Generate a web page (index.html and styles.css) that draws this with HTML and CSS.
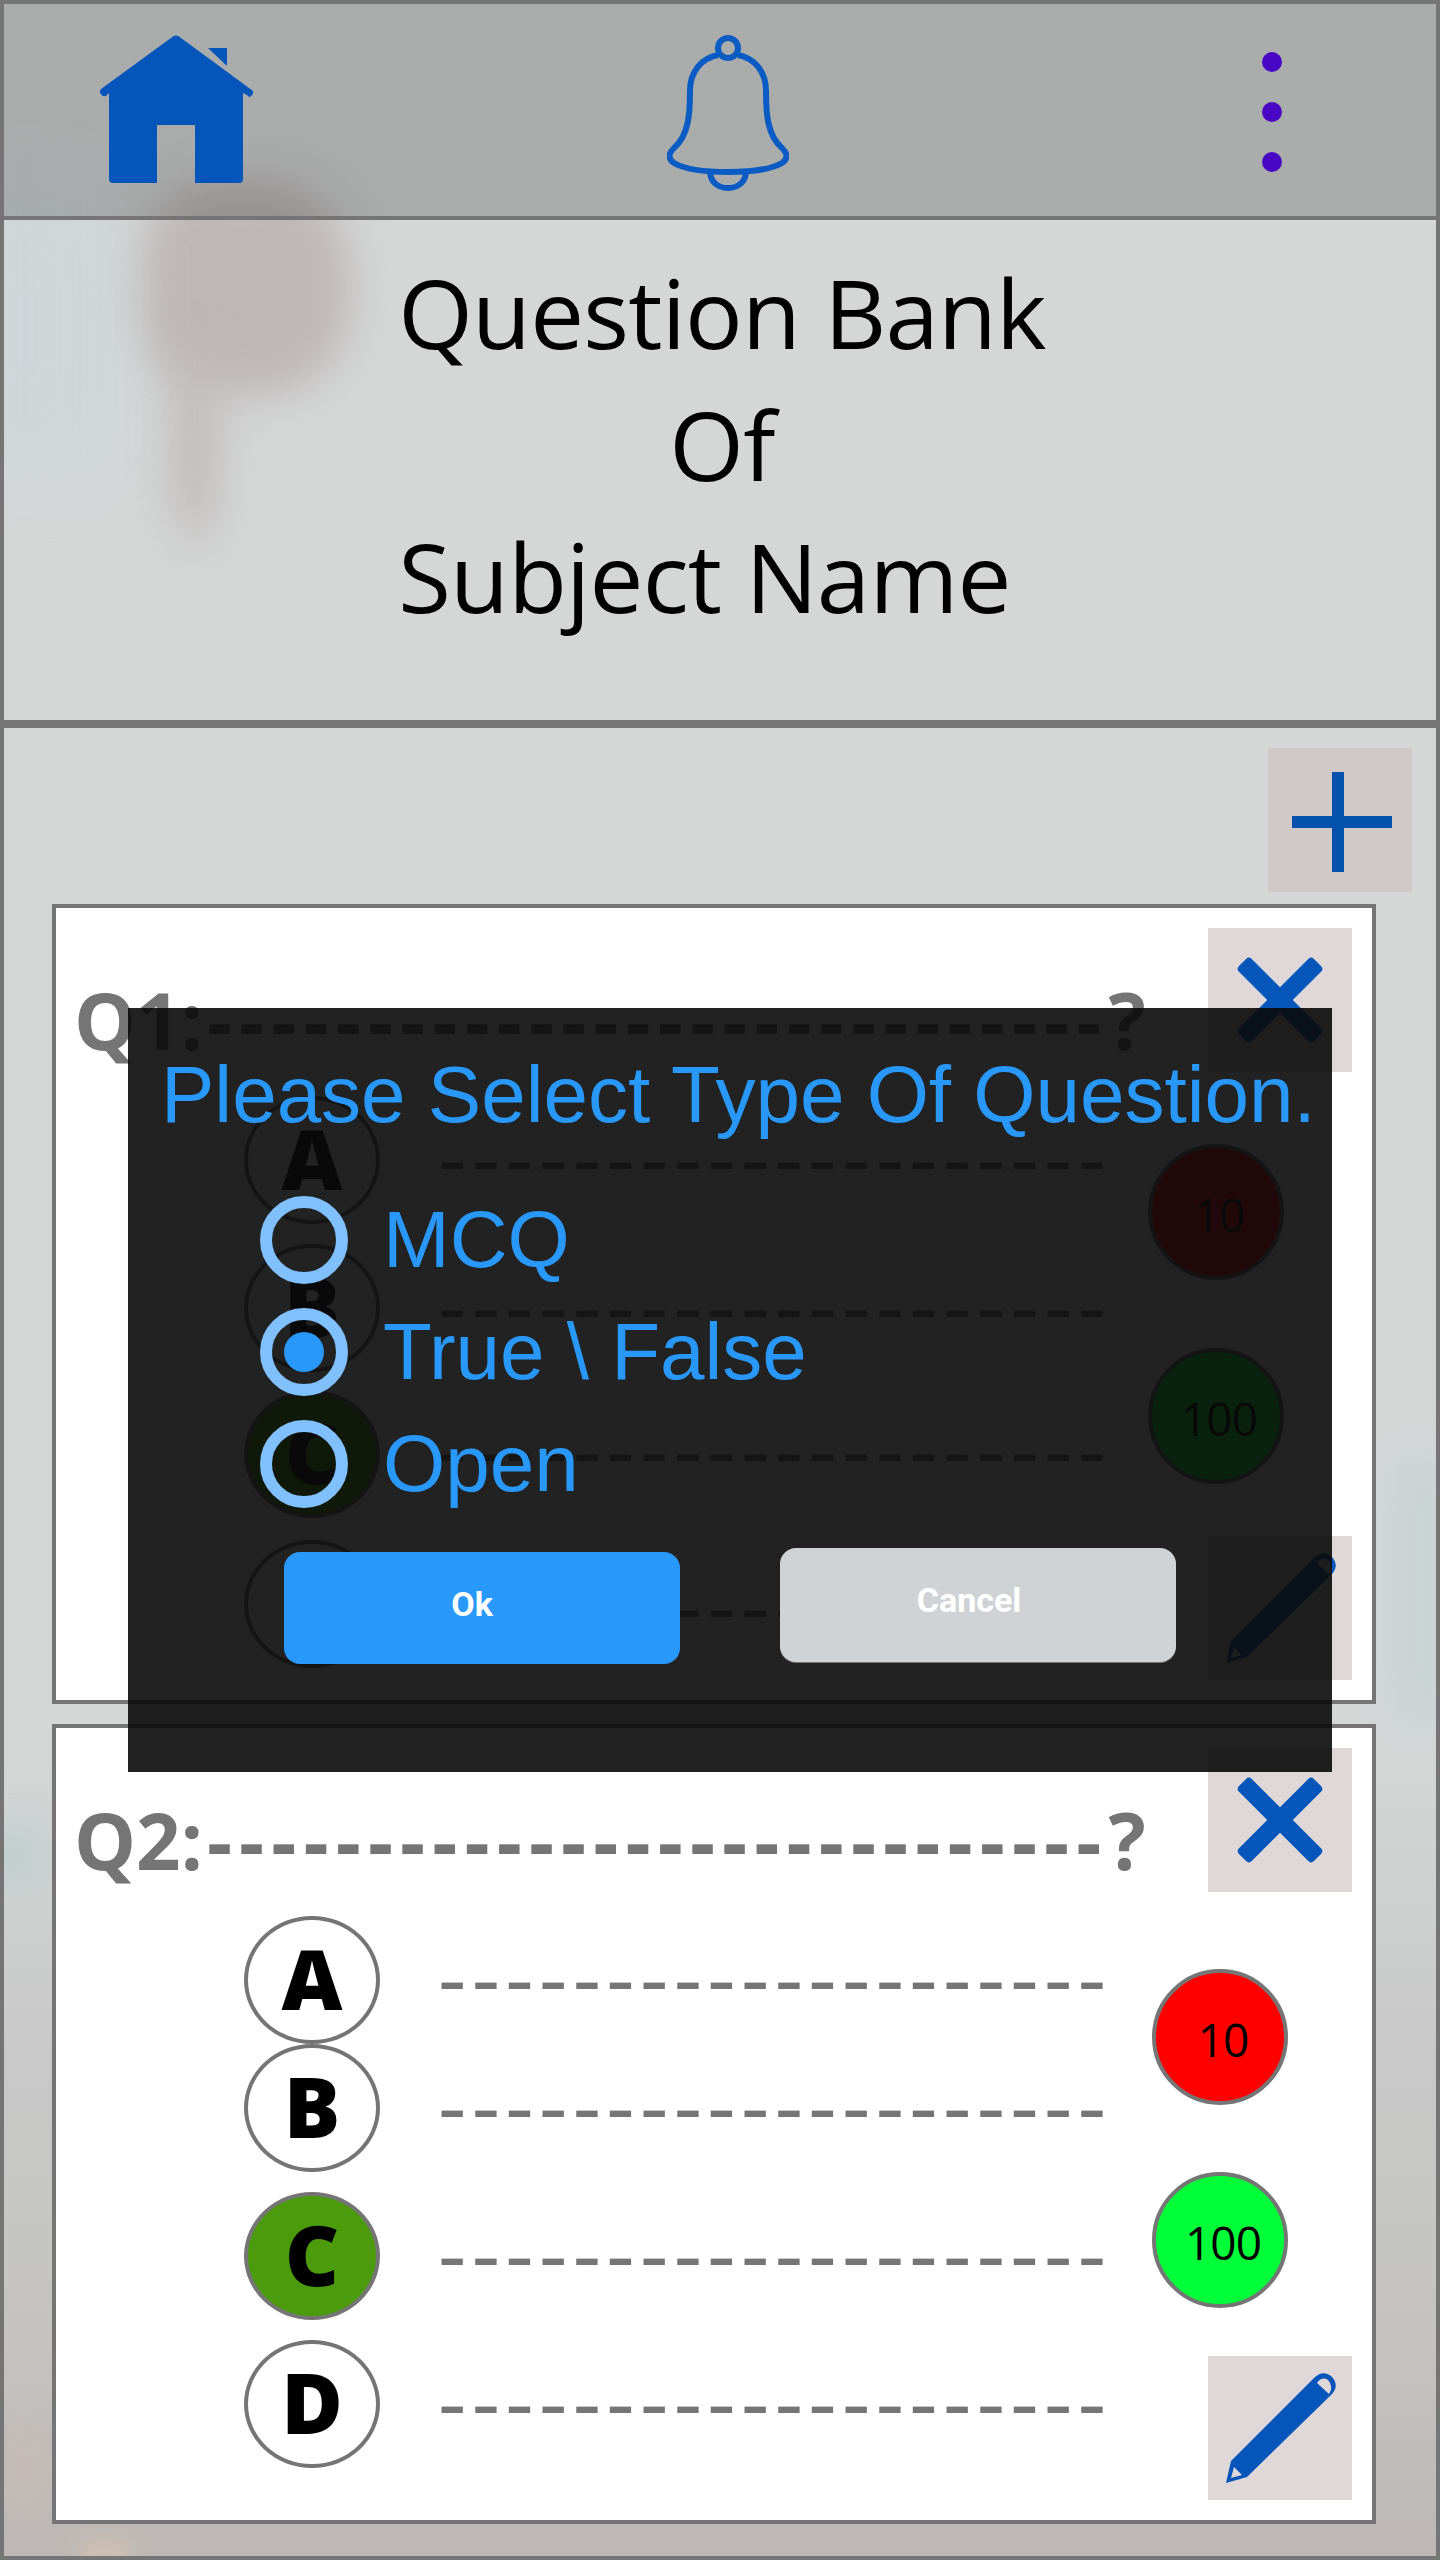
FILE: index.html
```html
<!DOCTYPE html>
<html lang="en">
<head>
    <meta charset="UTF-8">
    <meta name="viewport" content="width=device-width, initial-scale=1.0">
    <title>Question Bank</title>
    <link rel="stylesheet" href="styles.css">
</head>
<body>
    <!-- blurred photo behind the page -->
    <div class="backdrop">
        <div class="blob blob-head"></div>
        <div class="blob blob-tail"></div>
        <div class="blob blob-blue"></div>
        <div class="blob blob-side"></div>
        <div class="blob blob-right"></div>
        <div class="blob blob-low"></div>
        <div class="blob blob-peach"></div>
    </div>

    <div class="app">
        <header class="topbar">
            <svg class="icon-home" width="154" height="148" viewBox="0 0 154 148">
                <path class="blue-fill" d="M148 60 150 62A5 5 0 0 0 154 56 L150 53 L80 1.500 A5 5 0 0 0 74 1.500 L2 54 A4.500 4.500 0 0 0 7 61 L10 58 V144 Q10 148 14 148 H58 V90 H96 V148 H140 Q144 148 144 144 V58Z"/>
                <path class="blue-fill" d="M109 13 H128 V31Z"/>
            </svg>
            <svg class="icon-bell" width="122" height="156" viewBox="0 0 122 156">
                <g class="blue-line">
                    <circle cx="61" cy="13" r="10"/>
                    <path d="M51 20C35 23 23 36 23 56C23 78 22 100 7 113C1 119 1 124 7 128C19 135 41 137 61 137C81 137 103 135 115 128C121 124 121 119 115 113C100 100 99 78 99 56C99 36 87 23 71 20"/>
                    <path d="M43 136C43 147 51 153 61 153C71 153 79 147 79 136"/>
                </g>
            </svg>
            <div class="dots"><span></span><span></span><span></span></div>
        </header>

        <section class="title-band">
            <h1 class="title">
                <span>Question Bank</span>
                <span class="title-mid">Of</span>
                <span>Subject Name</span>
            </h1>
        </section>

        <main class="content">
            <div class="add-row">
                <button class="tool tool-add" aria-label="Add">
                    <svg width="144" height="144" viewBox="0 0 144 144"><path class="plus" d="M64 24H76V68H124V80H76V124H64V80H24V68H64Z"/></svg>
                </button>
            </div>

            <div class="card card-one">
                <div class="q-top">
                    <p class="q-text">Q1:<span class="q-dash">----------------------------</span>?</p>
                    <button class="tool" aria-label="Delete">
                        <svg width="144" height="144" viewBox="0 0 144 144"><g class="blue-fill"><rect x="19" y="63" width="106" height="18" rx="4" transform="rotate(45 72 72)"/><rect x="19" y="63" width="106" height="18" rx="4" transform="rotate(-45 72 72)"/></g></svg>
                    </button>
                </div>
                <div class="q-body">
                    <div class="answers">
                        <div class="answer"><span class="letter">A</span><span class="dash">--------------------</span></div>
                        <div class="answer"><span class="letter">B</span><span class="dash">--------------------</span></div>
                        <div class="answer"><span class="letter right">C</span><span class="dash">--------------------</span></div>
                        <div class="answer"><span class="letter">D</span><span class="dash">--------------------</span></div>
                    </div>
                    <div class="scores">
                        <span class="score score-bad">10</span>
                        <span class="score score-good">100</span>
                        <button class="tool tool-edit" aria-label="Edit">
                            <svg width="144" height="144" viewBox="0 0 144 144"><path class="blue-fill" fill-rule="evenodd" d="M23 105 106 22Q115 13 124 21Q132 30 123 39L39 121 18 127ZM109 27 121 38Q126 30 120 24Q114 20 109 27ZM26 111 23 122 34 119Z"/></svg>
                        </button>
                    </div>
                </div>
            </div>

            <div class="card card-two">
                <div class="q-top">
                    <p class="q-text">Q2:<span class="q-dash">----------------------------</span>?</p>
                    <button class="tool" aria-label="Delete">
                        <svg width="144" height="144" viewBox="0 0 144 144"><g class="blue-fill"><rect x="19" y="63" width="106" height="18" rx="4" transform="rotate(45 72 72)"/><rect x="19" y="63" width="106" height="18" rx="4" transform="rotate(-45 72 72)"/></g></svg>
                    </button>
                </div>
                <div class="q-body">
                    <div class="answers">
                        <div class="answer"><span class="letter">A</span><span class="dash">--------------------</span></div>
                        <div class="answer"><span class="letter">B</span><span class="dash">--------------------</span></div>
                        <div class="answer"><span class="letter right">C</span><span class="dash">--------------------</span></div>
                        <div class="answer"><span class="letter">D</span><span class="dash">--------------------</span></div>
                    </div>
                    <div class="scores">
                        <span class="score score-bad">10</span>
                        <span class="score score-good">100</span>
                        <button class="tool tool-edit" aria-label="Edit">
                            <svg width="144" height="144" viewBox="0 0 144 144"><path class="blue-fill" fill-rule="evenodd" d="M23 105 106 22Q115 13 124 21Q132 30 123 39L39 121 18 127ZM109 27 121 38Q126 30 120 24Q114 20 109 27ZM26 111 23 122 34 119Z"/></svg>
                        </button>
                    </div>
                </div>
            </div>
        </main>
    </div>

    <div class="modal">
        <h2 class="modal-title">Please Select Type Of Question.</h2>
        <div class="radio-list">
            <div class="radio-row"><span class="radio"></span><span class="radio-label">MCQ</span></div>
            <div class="radio-row"><span class="radio checked"></span><span class="radio-label">True \ False</span></div>
            <div class="radio-row"><span class="radio"></span><span class="radio-label">Open</span></div>
        </div>
        <div class="modal-actions">
            <button class="btn btn-ok">Ok</button>
            <button class="btn btn-cancel">Cancel</button>
        </div>
    </div>
</body>
</html>
```

FILE: styles.css
```css
* {
    box-sizing: border-box;
}

html, body {
    margin: 0;
    padding: 0;
}

body {
    position: relative;
    width: 1440px;
    height: 2560px;
    overflow: hidden;
    background-color: #d5d7d7;
    font-family: "Open Sans", sans-serif;
}

/* backdrop */
.backdrop {
    position: absolute;
    inset: 0;
    overflow: hidden;
    background: linear-gradient(#d5d7d7 0, #d5d7d7 1750px, #c8c9c8 2050px, #c4c3c2 2350px, #bcb7b4 2560px);
}

.blob {
    position: absolute;
    filter: blur(22px);
}

.blob-head {
    left: 135px;
    top: 180px;
    width: 215px;
    height: 215px;
    border-radius: 40%;
    background-color: #bdb7b6;
}

.blob-tail {
    left: 170px;
    top: 340px;
    width: 50px;
    height: 210px;
    border-radius: 50%;
    background-color: #c0bbba;
}

.blob-blue {
    left: -60px;
    top: 200px;
    width: 170px;
    height: 260px;
    background-color: #ced6d8;
    filter: blur(40px);
}

.blob-side {
    left: -40px;
    top: 1825px;
    width: 85px;
    height: 60px;
    background-color: #c2d0ce;
    filter: blur(16px);
}

.blob-right {
    left: 1395px;
    top: 1460px;
    width: 60px;
    height: 260px;
    background-color: #c8d3d3;
    filter: blur(24px);
}

.blob-low {
    left: 0;
    top: 2430px;
    width: 45px;
    height: 70px;
    background-color: #c6bcb7;
    filter: blur(14px);
}

.blob-peach {
    left: 80px;
    top: 2540px;
    width: 50px;
    height: 30px;
    background-color: #d0c0b2;
    filter: blur(10px);
}

/* page */
.app {
    position: relative;
    display: flex;
    flex-direction: column;
    height: 2560px;
}

.topbar {
    flex: none;
    display: flex;
    height: 220px;
    border: 4px solid #757575;
    background-color: rgba(0, 0, 0, 0.2);
}

.icon-home {
    flex: none;
    margin: 31px 0 0 95px;
}

.icon-bell {
    flex: none;
    margin: 31px 0 0 414px;
}

.dots {
    flex: none;
    display: flex;
    flex-direction: column;
    gap: 30px;
    margin: 48px 0 0 473px;
}

.dots span {
    width: 20px;
    height: 20px;
    border-radius: 50%;
    background-color: #4807c5;
}

.blue-fill {
    fill: #0555bb;
}

.blue-line {
    fill: none;
    stroke: #0a5cc4;
    stroke-width: 6;
}

.plus {
    fill: #0450ad;
}

.title-band {
    flex: none;
    display: flex;
    justify-content: center;
    height: 504px;
    padding-left: 4px;
    border: 4px solid #757575;
    border-top: 0;
}

.title {
    display: flex;
    flex-direction: column;
    margin: 26px 0 0;
    font-size: 96px;
    font-weight: 400;
    line-height: 132px;
    letter-spacing: -0.8px;
    color: #000;
}

.title-mid {
    text-align: center;
}

.content {
    flex: 1;
    padding: 20px 24px 0 48px;
    border: 4px solid #757575;
}

.add-row {
    display: flex;
    justify-content: flex-end;
    margin-bottom: 12px;
}

.tool {
    flex: none;
    display: block;
    width: 144px;
    height: 144px;
    padding: 0;
    border: 0;
    background-color: #e0d8d8;
}

.tool svg {
    display: block;
}

.tool-add {
    background-color: #d0c9c8;
}

.tool-edit {
    align-self: flex-end;
    margin-top: auto;
}

.card {
    display: flex;
    flex-direction: column;
    width: 1324px;
    height: 800px;
    padding: 20px 20px 20px 18px;
    border: 4px solid #757575;
    background-color: #fff;
}

.card-two {
    margin-top: 20px;
}

.q-top {
    flex: none;
    display: flex;
    justify-content: space-between;
    height: 168px;
}

.q-text {
    margin: 42px 0 0;
    font-size: 78px;
    font-weight: 700;
    line-height: 100px;
    white-space: nowrap;
    color: #757575;
}

.q-dash {
    margin-left: 4px;
    letter-spacing: 7.1px;
}

.q-body {
    flex: 1;
    display: flex;
}

.answers {
    flex: none;
    width: 1074px;
    padding-left: 170px;
}

.answer {
    display: flex;
    align-items: center;
    height: 128px;
}

.card-one .answer:nth-child(2) { margin-top: 20px; }
.card-one .answer:nth-child(3) { margin-top: 18px; }
.card-one .answer:nth-child(4) { margin-top: 22px; }
.card-two .answer:nth-child(3) { margin-top: 20px; }
.card-two .answer:nth-child(4) { margin-top: 20px; }

.letter {
    flex: none;
    display: flex;
    align-items: center;
    justify-content: center;
    width: 136px;
    height: 128px;
    padding-bottom: 4px;
    border: 4px solid #757575;
    border-radius: 50%;
    background-color: #fff;
    font-family: "Noto Sans", sans-serif;
    font-size: 84px;
    font-weight: 900;
    line-height: 1;
    color: #000;
}

.letter.right {
    background-color: #4b9b0c;
}

.dash {
    margin: 0 0 10px 58px;
    font-family: "Open Sans", sans-serif;
    font-size: 88px;
    font-weight: 400;
    line-height: 1;
    letter-spacing: 5.35px;
    white-space: nowrap;
    color: #757575;
}

.card-one .answer:nth-child(3) .dash { margin-bottom: 14px; }
.card-one .answer:nth-child(4) .dash { margin-bottom: 2px; }

.scores {
    flex: 1;
    display: flex;
    flex-direction: column;
    align-items: flex-start;
    margin-top: 48px;
}

.card-two .scores {
    margin: 53px 0 0 4px;
}

.score {
    display: flex;
    align-items: center;
    justify-content: center;
    width: 136px;
    height: 136px;
    padding: 4px 0 0 6px;
    border: 4px solid #757575;
    border-radius: 50%;
    font-size: 46px;
    font-weight: 400;
    letter-spacing: -1px;
    color: #000;
}

.score-bad {
    background-color: #ff0000;
    margin-bottom: 68px;
}

.card-two .score-bad {
    margin-bottom: 67px;
}

.score-good {
    background-color: #00ff38;
}

/* dialog */
.modal {
    position: absolute;
    left: 128px;
    top: 1008px;
    width: 1204px;
    height: 764px;
    padding: 41px 0 0 33px;
    background-color: rgba(10, 10, 10, 0.9);
    font-family: "Liberation Sans", Arial, sans-serif;
    color: #2899fb;
}

.modal-title {
    margin: 0;
    font-size: 80px;
    font-weight: 400;
    line-height: 92px;
    white-space: nowrap;
}

.radio-list {
    margin: 43px 0 0 99px;
}

.radio-row {
    display: flex;
    align-items: center;
    gap: 35px;
    height: 112px;
}

.radio {
    flex: none;
    position: relative;
    width: 88px;
    height: 88px;
    border: 12px solid #80c0fc;
    border-radius: 50%;
}

.radio.checked::after {
    content: "";
    position: absolute;
    left: 12px;
    top: 12px;
    width: 40px;
    height: 40px;
    border-radius: 50%;
    background-color: #2899fb;
}

.radio-label {
    font-size: 80px;
    line-height: 92px;
    white-space: nowrap;
}

.modal-actions {
    display: flex;
    align-items: flex-start;
    gap: 100px;
    margin: 28px 0 0 123px;
}

.btn {
    width: 396px;
    border: 0;
    border-radius: 16px;
    font-family: Roboto, sans-serif;
    font-size: 34px;
    font-weight: 700;
    color: #fff;
}

.btn-ok {
    height: 112px;
    margin-top: 4px;
    padding: 0 20px 8px 0;
    background-color: #2899fb;
}

.btn-cancel {
    height: 114px;
    padding: 0 18px 10px 0;
    background-color: #cfd3d6;
    box-shadow: 0 1px 0 #757575;
}
```
